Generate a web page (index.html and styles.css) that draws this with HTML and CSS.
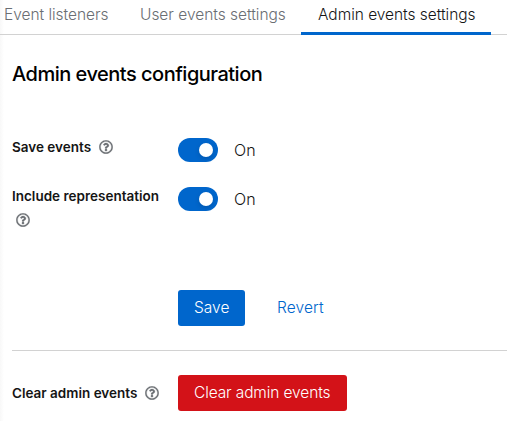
FILE: index.html
```
<!DOCTYPE html>
<html lang="en">
<head>
<meta charset="utf-8">
<title>Admin events settings</title>
<link rel="stylesheet" href="styles.css">
</head>
<body>
<svg class="defs" aria-hidden="true"><symbol id="help" viewBox="0 0 512 512"><path d="M256 8C119.043 8 8 119.083 8 256c0 136.997 111.043 248 248 248s248-111.003 248-248C504 119.083 392.957 8 256 8zm0 448c-110.532 0-200-89.431-200-200 0-110.495 89.472-200 200-200 110.491 0 200 89.471 200 200 0 110.53-89.431 200-200 200zm107.244-255.2c0 67.052-72.421 68.084-72.421 92.863V300c0 6.627-5.373 12-12 12h-45.647c-6.627 0-12-5.373-12-12v-8.659c0-35.745 27.1-50.034 47.579-61.516 17.561-9.845 28.324-16.541 28.324-29.579 0-17.246-21.999-28.693-39.784-28.693-23.189 0-33.894 10.977-48.942 29.969-4.057 5.12-11.46 6.071-16.666 2.124l-27.824-21.098c-5.107-3.872-6.251-11.066-2.644-16.363C184.846 131.491 214.94 112 261.794 112c49.071 0 101.45 38.304 101.45 88.8zM298 368c0 23.159-18.841 42-42 42s-42-18.841-42-42 18.841-42 42-42 42 18.841 42 42z"/></symbol></svg>
<nav class="tabs">
  <a class="tab tab-listeners">Event listeners</a>
  <a class="tab tab-user">User events settings</a>
  <a class="tab tab-admin current">Admin events settings</a>
</nav>
<main>
  <h1>Admin events configuration</h1>
  <form>
    <div class="row">
      <div class="label"><span class="label-save">Save events</span><svg class="help"><use href="#help"/></svg></div>
      <div class="control"><span class="switch"></span><span class="state">On</span></div>
    </div>
    <div class="row">
      <div class="label"><span class="label-include">Include representation</span><svg class="help"><use href="#help"/></svg></div>
      <div class="control"><span class="switch"></span><span class="state">On</span></div>
    </div>
    <div class="actions">
      <button type="button" class="btn primary">Save</button>
      <button type="button" class="btn link">Revert</button>
    </div>
  </form>
  <section class="clear">
    <div class="label"><span class="label-clear">Clear admin events</span><svg class="help"><use href="#help"/></svg></div>
    <button type="button" class="btn danger">Clear admin events</button>
  </section>
</main>
</body>
</html>
```
FILE: styles.css
```
* { box-sizing: border-box; }
body {
  margin: 0;
  height: 421px;
  overflow: hidden;
  background: linear-gradient(to right, #f8f8f8, #fff 4px);
  color: #151515;
  font: 300 16px/24px Inter, "Open Sans", sans-serif;
}
.defs { display: none; }
.tabs {
  display: flex;
  height: 35px;
  border-bottom: 1px solid #d2d2d2;
  white-space: nowrap;
}
.tab {
  height: 35px;
  padding: 3px 0 0 16px;
  color: #6a6e73;
  font-size: 15.5px;
}
.tab-listeners { width: 124px; padding-left: 4px; letter-spacing: -.04px; }
.tab-user { width: 177px; letter-spacing: -.02px; }
.tab-admin { width: 190px; padding-left: 17px; letter-spacing: -.03px; }
.current { color: #151515; border-bottom: 3px solid #06c; }
main { padding-left: 12px; }
h1 {
  margin: 24px 0 0;
  font-size: 20px;
  font-weight: 500;
  line-height: 30px;
  letter-spacing: -.5px;
  color: #000;
  white-space: nowrap;
}
form {
  height: 262px;
  padding-top: 45px;
  border-bottom: 1px solid #d2d2d2;
}
.row { display: grid; grid-template-columns: 166px 1fr; height: 49px; }
.label {
  font-size: 13.5px;
  font-weight: 600;
  line-height: 24px;
}
.row .label { padding-top: 1px; }
.label span { display: inline-block; white-space: nowrap; }
.help {
  width: 14px;
  height: 14px;
  margin: 0 4px 0 8px;
  fill: #6a6e73;
  stroke: #6a6e73;
  stroke-width: 10px;
  vertical-align: -2px;
}
.label-include + .help { margin-left: 4px; }
.control { display: flex; align-items: center; height: 32px; }
.switch {
  display: flex;
  align-items: center;
  justify-content: flex-end;
  width: 40px;
  height: 24px;
  padding-right: 5px;
  border-radius: 12px;
  background: #06c;
}
.switch::after {
  content: "";
  width: 14px;
  height: 14px;
  border-radius: 50%;
  background: #fff;
  box-shadow: 0 2px 5px rgba(0, 0, 0, .15);
}
.state { margin-left: 16px; }
.actions { display: flex; gap: 16px; margin: 58px 0 0 166px; }
.btn {
  height: 36px;
  padding: 0 0 0 16px;
  border: 0;
  border-radius: 3px;
  background: none;
  color: #fff;
  font: inherit;
  font-size: 15.5px;
  text-align: left;
  white-space: nowrap;
}
.primary { width: 67px; background: #06c; }
.link { width: 79px; color: #06c; letter-spacing: .1px; }
.danger { width: 169px; background: #d31218; letter-spacing: -.12px; }
.clear { display: grid; grid-template-columns: 166px 1fr; align-items: center; height: 36px; margin-top: 24px; }
```
